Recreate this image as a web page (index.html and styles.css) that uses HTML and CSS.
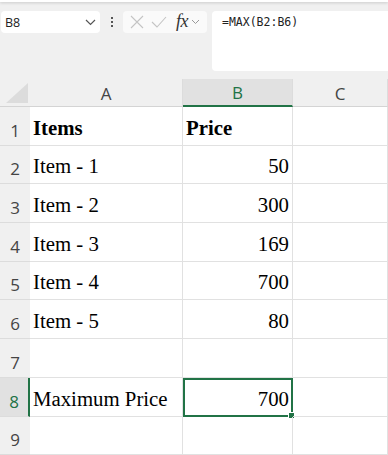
FILE: index.html
```html
<!DOCTYPE html>
<html>
<head>
<meta charset="utf-8">
<link rel="stylesheet" href="styles.css">
</head>
<body>
<div class="topstrip"></div>
<div class="toolbar">
  <div class="namebox">
    <span class="name">B8</span>
    <svg class="chev" width="11" height="7" viewBox="0 0 11 7"><path d="M1 1 L5.5 5.5 L10 1" fill="none" stroke="#555" stroke-width="1.2"/></svg>
  </div>
  <div class="dots"><i></i><i></i><i></i></div>
  <div class="fxbox">
    <svg width="14" height="14" viewBox="0 0 14 14"><path d="M1 1 L13 13 M13 1 L1 13" stroke="#c4c4c4" stroke-width="1.1" fill="none"/></svg>
    <svg width="16" height="12" viewBox="0 0 16 12"><path d="M1 6 L6 11 L15 1" stroke="#c4c4c4" stroke-width="1.1" fill="none"/></svg>
    <span class="fx">fx</span>
    <svg width="9" height="6" viewBox="0 0 9 6"><path d="M1 1 L4.5 4.5 L8 1" fill="none" stroke="#999" stroke-width="1"/></svg>
  </div>
  <div class="formula">=MAX(B2:B6)</div>
</div>
<div class="sheet">
  <div class="corner"><div class="tri"></div></div>
  <div class="ch">A</div>
  <div class="ch sel">B</div>
  <div class="ch">C</div>

  <div class="rh">1</div><div class="c b">Items</div><div class="c b">Price</div><div class="c"></div>
  <div class="rh">2</div><div class="c">Item - 1</div><div class="c r">50</div><div class="c"></div>
  <div class="rh">3</div><div class="c">Item - 2</div><div class="c r">300</div><div class="c"></div>
  <div class="rh">4</div><div class="c">Item - 3</div><div class="c r">169</div><div class="c"></div>
  <div class="rh">5</div><div class="c">Item - 4</div><div class="c r">700</div><div class="c"></div>
  <div class="rh">6</div><div class="c">Item - 5</div><div class="c r">80</div><div class="c"></div>
  <div class="rh">7</div><div class="c"></div><div class="c"></div><div class="c"></div>
  <div class="rh sel">8</div><div class="c">Maximum Price</div><div class="c r active">700<span class="handle"></span></div><div class="c"></div>
  <div class="rh">9</div><div class="c"></div><div class="c"></div><div class="c"></div>
</div>
</body>
</html>
```
FILE: styles.css
```css
html, body {
  margin: 0;
  padding: 0;
  background: #f0f0f0;
  overflow: hidden;
  width: 388px;
  height: 455px;
}
.topstrip {
  height: 2px;
  background: #ffffff;
  box-shadow: 0 1px 3px rgba(0,0,0,0.18);
}
.toolbar {
  display: flex;
  align-items: flex-start;
  padding-top: 9px;
  box-sizing: border-box;
  height: 77px;
}
.namebox {
  margin-left: 1px;
  width: 99px;
  height: 22px;
  background: #fff;
  border-radius: 4px;
  display: flex;
  align-items: center;
  justify-content: space-between;
  padding: 0 4px 0 4px;
  box-sizing: border-box;
  font-family: "Open Sans", "Noto Sans", sans-serif;
  font-size: 12.5px;
  color: #222;
}
.chev { margin-top: 1px; }
.dots {
  width: 23px;
  height: 22px;
  display: flex;
  flex-direction: column;
  align-items: center;
  justify-content: center;
  gap: 2px;
}
.dots i {
  display: block;
  width: 2px;
  height: 2px;
  background: #555;
}
.fxbox {
  width: 84px;
  height: 22px;
  background: #fafafa;
  border-radius: 4px;
  display: flex;
  align-items: center;
  padding-left: 7px;
  box-sizing: border-box;
  gap: 7px;
}
.fx {
  font-family: "Liberation Serif", serif;
  font-style: italic;
  font-size: 18px;
  color: #333;
  margin-left: 2px;
  margin-right: -4px;
  letter-spacing: -0.5px;
  line-height: 1;
  margin-top: -2px;
}
.formula {
  margin-left: 5px;
  flex: 1;
  height: 60px;
  background: #fff;
  border-radius: 4px 0 0 4px;
  box-sizing: border-box;
  padding: 4px 0 0 10px;
  font-family: "DejaVu Sans Mono", "Liberation Mono", monospace;
  font-size: 11.5px;
  color: #222;
}
.sheet {
  display: grid;
  grid-template-columns: 30px 153px 110px 95px;
  grid-template-rows: 28px repeat(9, 38.7px);
  background: #fff;
}
.corner {
  background: #f0f0f0;
  position: relative;
  border-bottom: 1px solid #d4d4d4;
}
.tri {
  position: absolute;
  right: 2px;
  bottom: 3px;
  width: 0;
  height: 0;
  border-left: 22px solid transparent;
  border-bottom: 20px solid #dcdcdc;
}
.ch {
  background: #f0f0f0;
  border-bottom: 1px solid #d4d4d4;
  border-right: 1px solid #dcdcdc;
  font-family: "Open Sans", "Noto Sans", sans-serif;
  font-size: 17px;
  color: #444;
  display: flex;
  align-items: center;
  justify-content: center;
  padding-top: 1px;
  box-sizing: border-box;
}
.ch.sel {
  background: #e1e1e1;
  color: #217346;
  border-bottom: 2px solid #217346;
}
.rh {
  background: #f0f0f0;
  border-bottom: 1px solid #dcdcdc;
  font-family: "Open Sans", "Noto Sans", sans-serif;
  font-size: 17px;
  color: #444;
  display: flex;
  align-items: flex-end;
  justify-content: center;
  padding-bottom: 3px;
  box-sizing: border-box;
}
.rh.sel {
  background: #e1e1e1;
  color: #217346;
  border-right: 2px solid #217346;
}
.c {
  border-right: 1px solid #e1e1e1;
  border-bottom: 1px solid #e1e1e1;
  font-family: "Liberation Serif", serif;
  font-size: 20.8px;
  color: #000;
  display: flex;
  align-items: flex-end;
  padding: 0 3px 5px 3px;
  box-sizing: border-box;
  position: relative;
}
.c.b { font-weight: bold; }
.c.r { justify-content: flex-end; }
.c.active {
  outline: 2px solid #217346;
  outline-offset: -2px;
  padding-right: 3px;
}
.handle {
  position: absolute;
  right: -3px;
  bottom: -3px;
  width: 5px;
  height: 5px;
  background: #217346;
  border: 1px solid #fff;
}
```
